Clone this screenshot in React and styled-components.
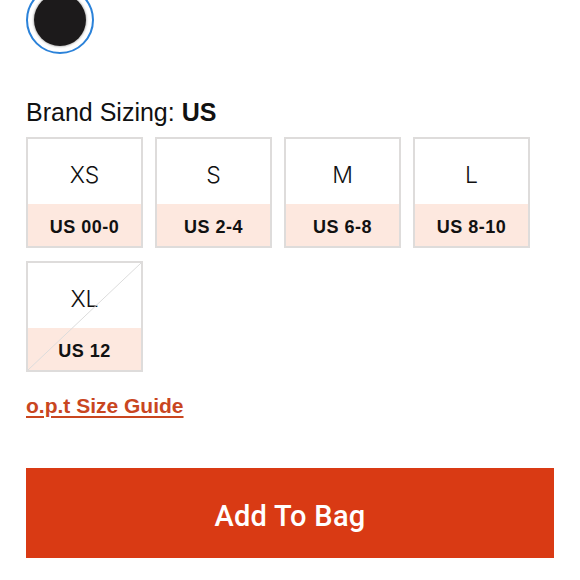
import React from 'react';
import styled, { createGlobalStyle } from 'styled-components';

const GlobalStyle = createGlobalStyle`
  body {
    margin: 0;
    background: #fff;
    font-family: Inter, "Liberation Sans", Arial, sans-serif;
    color: #111;
  }
`;

const sizes = [
  { letter: 'XS', us: 'US 00-0' },
  { letter: 'S', us: 'US 2-4' },
  { letter: 'M', us: 'US 6-8' },
  { letter: 'L', us: 'US 8-10' },
  { letter: 'XL', us: 'US 12', soldOut: true },
];

export default function App() {
  return (
    <Page>
      <GlobalStyle />
      <Swatch>
        <Dot />
      </Swatch>
      <Heading>
        Brand Sizing: <strong>US</strong>
      </Heading>
      <SizeGrid>
        {sizes.map((s) => (
          <Tile key={s.letter}>
            <Letter>{s.letter}</Letter>
            <UsSize>{s.us}</UsSize>
            {s.soldOut && (
              <Slash viewBox="0 0 100 100" preserveAspectRatio="none">
                <line x1="0" y1="100" x2="100" y2="0" stroke="#dcdcdc" strokeWidth="1" vectorEffect="non-scaling-stroke" />
              </Slash>
            )}
          </Tile>
        ))}
      </SizeGrid>
      <GuideLink href="#">o.p.t Size Guide</GuideLink>
      <AddButton>Add To Bag</AddButton>
    </Page>
  );
}

const Page = styled.div`
  padding: 0 26px;
  display: flex;
  flex-direction: column;
  align-items: flex-start;
`;

const Swatch = styled.div`
  margin-top: -14px;
  width: 68px;
  height: 68px;
  box-sizing: border-box;
  border: 2px solid #2b82d9;
  border-radius: 50%;
  display: flex;
  align-items: center;
  justify-content: center;
`;

const Dot = styled.div`
  width: 52px;
  height: 52px;
  border-radius: 50%;
  background: #1c1a1b;
  box-shadow: 0 0 2px 1px rgba(0, 0, 0, 0.25);
`;

const Heading = styled.div`
  margin-top: 43px;
  font-family: "Liberation Sans", Arial, sans-serif;
  font-size: 25px;
  line-height: 30px;
  color: #111;
  strong {
    font-weight: 700;
  }
`;

const SizeGrid = styled.div`
  margin-top: 10px;
  display: grid;
  grid-template-columns: repeat(4, 117px);
  gap: 13px 12px;
`;

const Tile = styled.div`
  position: relative;
  height: 111px;
  box-sizing: border-box;
  border: 2px solid #dedcdb;
  display: grid;
  grid-template-rows: 65px 1fr;
  overflow: hidden;
`;

const Letter = styled.div`
  display: flex;
  align-items: center;
  justify-content: center;
  padding-top: 6px;
  font-family: Inter, "Liberation Sans", sans-serif;
  font-weight: 300;
  font-size: 23px;
  color: #111;
  background: #fff;
`;

const UsSize = styled.div`
  display: flex;
  align-items: center;
  justify-content: center;
  padding-top: 5px;
  background: #fde8df;
  font-family: "Liberation Sans", Arial, sans-serif;
  font-weight: 700;
  font-size: 18px;
  letter-spacing: 0.5px;
  color: #111;
`;

const Slash = styled.svg`
  position: absolute;
  inset: 0;
  width: 100%;
  height: 100%;
  pointer-events: none;
`;

const GuideLink = styled.a`
  margin-top: 22px;
  font-family: "Liberation Sans", Arial, sans-serif;
  font-weight: 700;
  font-size: 21px;
  color: #c9461f;
  text-decoration: underline;
  text-underline-offset: 3px;
  text-decoration-thickness: 2px;
`;

const AddButton = styled.button`
  margin-top: 50px;
  width: 528px;
  height: 90px;
  padding-top: 7px;
  border: none;
  background: #d93a14;
  color: #fff;
  font-family: Roboto, "Liberation Sans", Arial, sans-serif;
  font-size: 29px;
  font-weight: 500;
  letter-spacing: 0.3px;
  cursor: pointer;
`;
